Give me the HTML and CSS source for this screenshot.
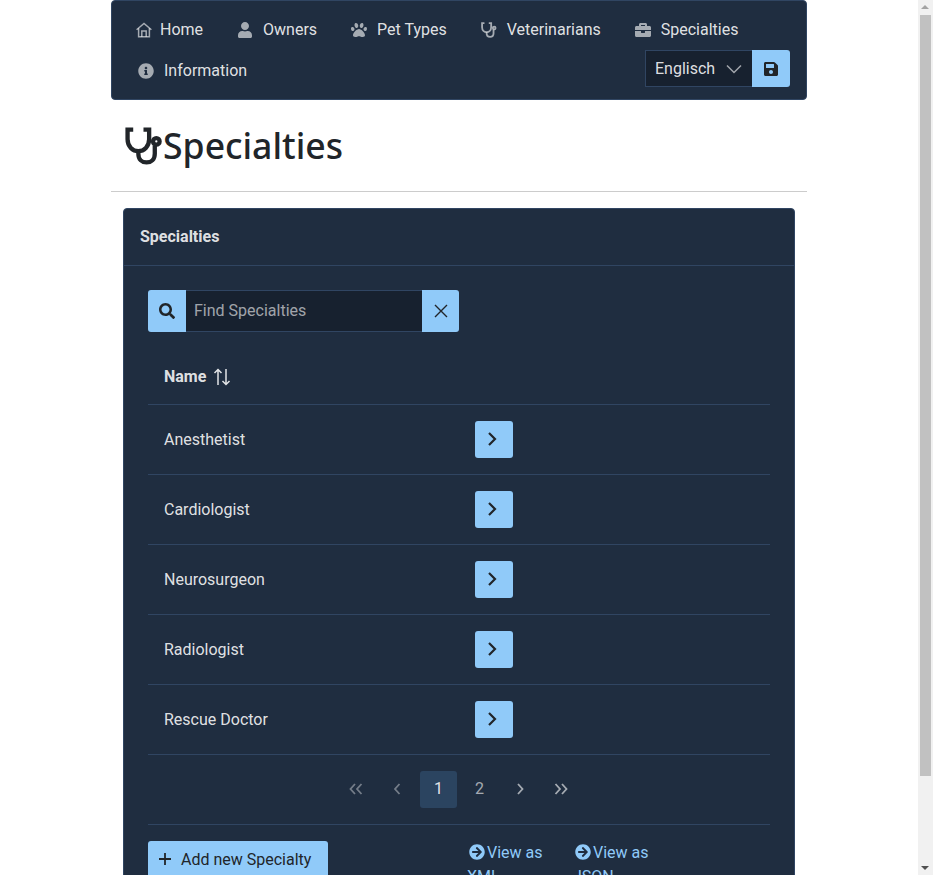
FILE: index.html
```html
<!DOCTYPE html>
<html lang="en">
<head>
  <meta charset="UTF-8">
  <meta name="viewport" content="width=device-width, initial-scale=1.0">
  <title>Specialties</title>
  <link rel="stylesheet" href="styles.css">
</head>
<body>
  <div class="container">
    <nav class="menubar">
      <a class="nav-link" href="#">
        <svg class="icon-home" viewBox="0 0 16 16" fill="none" stroke="currentColor" stroke-width="1.500"><path d="M.6 7.800 8 1.400l7.400 6.400"/><path d="M2.600 6.200v8.600h10.800V6.200"/><path d="M5.800 14.800V9h4.400v5.800"/></svg>
        <span>Home</span>
      </a>
      <a class="nav-link" href="#">
        <svg class="icon-fw" viewBox="0 0 448 512" fill="currentColor"><path d="M224 256c70.7 0 128-57.3 128-128S294.7 0 224 0 96 57.3 96 128s57.3 128 128 128zm89.6 32h-16.7c-22.2 10.2-46.9 16-72.9 16s-50.6-5.8-72.9-16h-16.7C60.2 288 0 348.2 0 422.4V464c0 26.5 21.5 48 48 48h352c26.5 0 48-21.5 48-48v-41.6c0-74.2-60.2-134.4-134.4-134.4z"/></svg>
        <span>Owners</span>
      </a>
      <a class="nav-link" href="#">
        <svg class="icon-fw" viewBox="0 0 512 512" fill="currentColor"><path d="M256 224c-79.41 0-192 122.76-192 200.25 0 34.9 26.81 55.75 71.74 55.75 48.84 0 81.09-25.08 120.26-25.08 39.51 0 71.85 25.08 120.26 25.08 44.93 0 71.74-20.85 71.74-55.75C448 346.76 335.41 224 256 224zm-147.28-12.61c-10.4-34.65-42.44-57.09-71.56-50.13-29.12 6.96-44.29 40.69-33.89 75.34 10.4 34.65 42.44 57.09 71.56 50.13 29.12-6.96 44.29-40.69 33.89-75.34zm84.72-20.78c30.94-8.14 46.42-49.94 34.58-93.36s-46.52-72.01-77.46-63.87-46.42 49.94-34.58 93.36c11.84 43.42 46.52 72.02 77.46 63.87zm281.39-29.34c-29.12-6.96-61.15 15.48-71.56 50.13-10.4 34.65 4.77 68.38 33.89 75.34 29.12 6.96 61.15-15.48 71.56-50.13 10.4-34.65-4.77-68.38-33.89-75.34zm-156.27 29.34c30.94 8.14 65.62-20.45 77.46-63.87 11.84-43.42-3.64-85.21-34.58-93.36s-65.62 20.45-77.46 63.87c-11.84 43.42 3.64 85.22 34.58 93.36z"/></svg>
        <span>Pet Types</span>
      </a>
      <a class="nav-link" href="#">
        <svg class="icon-fw" viewBox="0 0 37 37" fill="none" stroke="currentColor" stroke-width="4.200"><path d="M8 2.500H2.500V12c0 7 5 11.500 10.500 11.500S23.500 19 23.500 12V2.500H18"/><path d="M13 23.500V26c0 5.500 3.500 8.500 8 8.500s8-3 8-8.500v-8"/><circle cx="30.500" cy="14" r="3.200"/></svg>
        <span>Veterinarians</span>
      </a>
      <a class="nav-link" href="#">
        <svg class="icon-fw" viewBox="0 0 512 512" fill="currentColor"><path d="M320 336c0 8.840-7.160 16-16 16h-96c-8.840 0-16-7.160-16-16v-48H0v144c0 25.600 22.400 48 48 48h416c25.600 0 48-22.400 48-48V288H320v48zm144-208h-80V80c0-25.600-22.400-48-48-48H176c-25.600 0-48 22.400-48 48v48H48c-25.600 0-48 22.400-48 48v80h512v-80c0-25.600-22.400-48-48-48zm-144 0H192V96h128v32z"/></svg>
        <span>Specialties</span>
      </a>
      <a class="nav-link" href="#">
        <svg class="icon-fw" viewBox="0 0 512 512" fill="currentColor"><path d="M256 8C119.043 8 8 119.083 8 256c0 136.997 111.043 248 248 248s248-111.003 248-248C504 119.083 392.957 8 256 8zm0 110c23.196 0 42 18.804 42 42s-18.804 42-42 42-42-18.804-42-42 18.804-42 42-42zm56 254c0 6.627-5.373 12-12 12h-88c-6.627 0-12-5.373-12-12v-24c0-6.627 5.373-12 12-12h12v-64h-12c-6.627 0-12-5.373-12-12v-24c0-6.627 5.373-12 12-12h64c6.627 0 12 5.373 12 12v100h12c6.627 0 12 5.373 12 12v24z"/></svg>
        <span>Information</span>
      </a>
      <div class="lang-group">
        <div class="lang-select">
          <span>Englisch</span>
          <svg class="chevron-down" viewBox="0 0 16 10" fill="none" stroke="currentColor" stroke-width="1.500"><path d="M1 1.500l7 7 7-7"/></svg>
        </div>
        <button class="btn btn-lang" type="button">
          <svg class="icon-save" viewBox="0 0 448 512" fill="currentColor"><path d="M433.941 129.941l-83.882-83.882A48 48 0 0 0 316.118 32H48C21.490 32 0 53.490 0 80v352c0 26.510 21.490 48 48 48h352c26.510 0 48-21.490 48-48V163.882a48 48 0 0 0-14.059-33.941zM224 416c-35.346 0-64-28.654-64-64 0-35.346 28.654-64 64-64s64 28.654 64 64c0 35.346-28.654 64-64 64zm96-304.520V212c0 6.627-5.373 12-12 12H76c-6.627 0-12-5.373-12-12V108c0-6.627 5.373-12 12-12h228.520c3.183 0 6.235 1.264 8.485 3.515l3.480 3.480A11.996 11.996 0 0 1 320 111.480z"/></svg>
        </button>
      </div>
    </nav>

    <header class="page-title">
      <svg class="title-icon" viewBox="0 0 37 37" fill="none" stroke="currentColor" stroke-width="4.200"><path d="M8 2.500H2.500V12c0 7 5 11.500 10.500 11.500S23.500 19 23.500 12V2.500H18"/><path d="M13 23.500V26c0 5.500 3.500 8.500 8 8.500s8-3 8-8.500v-8"/><circle cx="30.500" cy="14" r="3.200"/></svg>
      <h1>Specialties</h1>
    </header>

    <section class="card">
      <div class="card-header">Specialties</div>
      <div class="card-body">
        <div class="search-group">
          <span class="search-addon">
            <svg class="icon-search" viewBox="0 0 512 512" fill="currentColor"><path d="M505 442.700L405.300 343c-4.500-4.500-10.600-7-17-7H372c27.600-35.300 44-79.700 44-128C416 93.100 322.900 0 208 0S0 93.100 0 208s93.100 208 208 208c48.300 0 92.700-16.400 128-44v16.300c0 6.400 2.500 12.500 7 17l99.700 99.700c9.400 9.400 24.600 9.400 33.900 0l28.300-28.300c9.400-9.400 9.400-24.600.1-34zM208 336c-70.700 0-128-57.200-128-128 0-70.700 57.200-128 128-128 70.700 0 128 57.200 128 128 0 70.700-57.200 128-128 128z"/></svg>
          </span>
          <input class="search-input" type="text" placeholder="Find Specialties">
          <button class="search-clear" type="button">
            <svg class="icon-x" viewBox="0 0 14 14" fill="none" stroke="currentColor" stroke-width="1.400"><path d="M1 1l12 12M13 1 1 13"/></svg>
          </button>
        </div>

        <table class="list">
          <thead>
            <tr>
              <th>
                <span class="sort-head">Name
                  <svg class="icon-sort" viewBox="0 0 18 18" fill="none" stroke="currentColor" stroke-width="1.500"><path d="M5 17V2M1.500 5 5 1.500 8.500 5"/><path d="M13 1v15M9.500 13l3.500 3.500 3.500-3.500"/></svg>
                </span>
              </th>
              <th></th>
            </tr>
          </thead>
          <tbody>
            <tr><td>Anesthetist</td><td><button class="btn btn-row" type="button"><svg class="icon-chevron" viewBox="0 0 10 14" fill="none" stroke="currentColor" stroke-width="2.200"><path d="M2 1l6 6-6 6"/></svg></button></td></tr>
            <tr><td>Cardiologist</td><td><button class="btn btn-row" type="button"><svg class="icon-chevron" viewBox="0 0 10 14" fill="none" stroke="currentColor" stroke-width="2.200"><path d="M2 1l6 6-6 6"/></svg></button></td></tr>
            <tr><td>Neurosurgeon</td><td><button class="btn btn-row" type="button"><svg class="icon-chevron" viewBox="0 0 10 14" fill="none" stroke="currentColor" stroke-width="2.200"><path d="M2 1l6 6-6 6"/></svg></button></td></tr>
            <tr><td>Radiologist</td><td><button class="btn btn-row" type="button"><svg class="icon-chevron" viewBox="0 0 10 14" fill="none" stroke="currentColor" stroke-width="2.200"><path d="M2 1l6 6-6 6"/></svg></button></td></tr>
            <tr><td>Rescue Doctor</td><td><button class="btn btn-row" type="button"><svg class="icon-chevron" viewBox="0 0 10 14" fill="none" stroke="currentColor" stroke-width="2.200"><path d="M2 1l6 6-6 6"/></svg></button></td></tr>
          </tbody>
        </table>

        <div class="pager">
          <a class="page-item disabled" href="#"><svg class="icon-page" viewBox="0 0 14 12" fill="none" stroke="currentColor" stroke-width="1.800"><path d="M6 1 1.500 6 6 11M12.500 1 8 6l4.500 5"/></svg></a>
          <a class="page-item disabled" href="#"><svg class="icon-page" viewBox="0 0 14 12" fill="none" stroke="currentColor" stroke-width="1.800"><path d="M9.500 1 5 6l4.500 5"/></svg></a>
          <a class="page-item active" href="#">1</a>
          <a class="page-item" href="#">2</a>
          <a class="page-item" href="#"><svg class="icon-page" viewBox="0 0 14 12" fill="none" stroke="currentColor" stroke-width="1.800"><path d="M5 1l4.500 5L5 11"/></svg></a>
          <a class="page-item" href="#"><svg class="icon-page" viewBox="0 0 14 12" fill="none" stroke="currentColor" stroke-width="1.800"><path d="M1.500 1 6 6l-4.500 5M8 1l4.500 5L8 11"/></svg></a>
        </div>

        <div class="card-actions">
          <div class="add-col">
            <button class="btn btn-add" type="button">
              <svg class="icon-plus" viewBox="0 0 14 14" fill="none" stroke="currentColor" stroke-width="1.800"><path d="M7 1v12M1 7h12"/></svg>
              <span>Add new Specialty</span>
            </button>
          </div>
          <div class="view-col"><a class="view-link" href="#"><svg class="icon-arrow" viewBox="0 0 512 512" fill="currentColor"><path d="M256 8c137 0 248 111 248 248S393 504 256 504 8 393 8 256 119 8 256 8zm-28.900 143.600l75.500 72.400H120c-13.300 0-24 10.700-24 24v16c0 13.300 10.700 24 24 24h182.600l-75.500 72.400c-9.700 9.300-9.900 24.800-.4 34.300l11 10.900c9.400 9.400 24.600 9.400 33.900 0L404.300 273c9.400-9.400 9.400-24.600 0-33.900L271.600 106.300c-9.400-9.400-24.600-9.400-33.900 0l-11 10.900c-9.500 9.600-9.300 25.100.4 34.400z"/></svg>View as XML</a></div>
          <div class="view-col"><a class="view-link" href="#"><svg class="icon-arrow" viewBox="0 0 512 512" fill="currentColor"><path d="M256 8c137 0 248 111 248 248S393 504 256 504 8 393 8 256 119 8 256 8zm-28.900 143.600l75.500 72.400H120c-13.300 0-24 10.700-24 24v16c0 13.300 10.700 24 24 24h182.600l-75.500 72.400c-9.700 9.300-9.900 24.800-.4 34.300l11 10.900c9.400 9.400 24.600 9.400 33.900 0L404.300 273c9.400-9.400 9.400-24.600 0-33.900L271.600 106.300c-9.400-9.400-24.600-9.400-33.900 0l-11 10.900c-9.500 9.600-9.300 25.100.4 34.400z"/></svg>View as JSON</a></div>
        </div>
      </div>
    </section>
  </div>

  <div class="scrollbar">
    <span class="scroll-arrow up"></span>
    <div class="scroll-thumb"></div>
    <span class="scroll-arrow down"></span>
  </div>
</body>
</html>
```
FILE: styles.css
```css
body {
  margin: 0;
  padding-right: 15px;
  background-color: #fff;
  color: rgba(255, 255, 255, 0.87);
  font-family: 'Roboto', sans-serif;
  font-size: 16px;
  line-height: 24px;
}
a {
  text-decoration: none;
  color: inherit;
}
button {
  font-family: inherit;
  font-size: inherit;
  border: none;
  padding: 0;
  cursor: pointer;
}
.container {
  width: 696px;
  margin: 0 auto;
  padding-bottom: 32px;
}

/* window scrollbar */
.scrollbar {
  position: fixed;
  top: 0;
  right: 0;
  bottom: 0;
  width: 15px;
  background-color: #f1f1f1;
}
.scroll-thumb {
  position: absolute;
  top: 15px;
  left: 2px;
  width: 11px;
  height: 761px;
  background-color: #c1c1c1;
}
.scroll-arrow {
  position: absolute;
  left: 3px;
  border-left: 4px solid transparent;
  border-right: 4px solid transparent;
}
.scroll-arrow.up {
  top: 5px;
  border-bottom: 4px solid #a3a3a3;
}
.scroll-arrow.down {
  bottom: 5px;
  border-top: 4px solid #505050;
}

/* top menu */
.menubar {
  display: flex;
  flex-wrap: wrap;
  row-gap: 1px;
  align-content: flex-start;
  align-items: flex-start;
  height: 100px;
  box-sizing: border-box;
  padding: 8px;
  background-color: #1f2d40;
  border: 1px solid #304562;
  border-radius: 4px;
}
.nav-link {
  display: flex;
  align-items: center;
  gap: 8px;
  height: 40px;
  box-sizing: border-box;
  padding: 2px 16px 0;
  color: rgba(255, 255, 255, 0.87);
}
.nav-link svg {
  color: rgba(255, 255, 255, 0.6);
}
.icon-home {
  width: 16px;
  height: 16px;
}
.icon-fw {
  width: 20px;
  height: 16px;
}
.lang-group {
  display: flex;
  margin-left: auto;
  margin-right: 8px;
  height: 37px;
}
.lang-select {
  display: flex;
  align-items: center;
  justify-content: space-between;
  width: 107px;
  box-sizing: border-box;
  padding: 0 10px 0 9px;
  background-color: #17212f;
  border: 1px solid #304562;
  border-right: none;
  border-radius: 0;
}
.chevron-down {
  width: 16px;
  height: 10px;
  color: rgba(255, 255, 255, 0.6);
}
.btn {
  display: inline-flex;
  align-items: center;
  justify-content: center;
  background-color: #90caf9;
  color: #212529;
  border-radius: 3px;
}
.btn-lang {
  width: 38px;
  height: 37px;
  border-radius: 0 3px 3px 0;
}
.icon-save {
  width: 14px;
  height: 16px;
}

/* page heading */
.page-title {
  display: flex;
  align-items: center;
  height: 91px;
  padding-left: 14px;
  border-bottom: 1px solid #ccc;
  color: #212529;
}
.title-icon {
  width: 38px;
  height: 38px;
}
.page-title h1 {
  margin: 0;
  font-family: 'Noto Sans', sans-serif;
  font-size: 35.6px;
  font-weight: 500;
  line-height: 43px;
}

/* card */
.card {
  margin: 16px 12px 0;
  background-color: #1f2d40;
  border: 1px solid #304562;
  border-radius: 4px;
}
.card-header {
  height: 57px;
  box-sizing: border-box;
  padding: 16px;
  font-weight: 700;
  border-bottom: 1px solid #304562;
}
.card-body {
  padding: 24px;
}
.search-group {
  display: flex;
  height: 42px;
  width: 311px;
}
.search-addon {
  display: flex;
  align-items: center;
  justify-content: center;
  width: 38px;
  background-color: #90caf9;
  color: #212529;
  border-radius: 3px 0 0 3px;
}
.icon-search {
  width: 16px;
  height: 16px;
}
.search-input {
  flex: 1;
  min-width: 0;
  box-sizing: border-box;
  padding: 0 8px 2px;
  background-color: #17212f;
  border: 1px solid #304562;
  border-left: none;
  border-right: none;
  color: rgba(255, 255, 255, 0.87);
  font-family: inherit;
  font-size: 16px;
  outline: none;
}
.search-input::placeholder {
  color: rgba(255, 255, 255, 0.6);
}
.search-clear {
  display: flex;
  align-items: center;
  justify-content: center;
  width: 37px;
  background-color: #90caf9;
  color: #212529;
  border-radius: 0 3px 3px 0;
}
.icon-x {
  width: 14px;
  height: 14px;
}

/* table */
.list {
  width: 100%;
  margin-top: 16px;
  border-collapse: collapse;
  table-layout: fixed;
}
.list th {
  height: 56px;
  padding: 2px 16px 0;
  text-align: left;
  font-weight: 700;
  border-bottom: 1px solid #304562;
  box-sizing: border-box;
}
.list td {
  height: 70px;
  padding: 0 16px;
  border-bottom: 1px solid #304562;
  box-sizing: border-box;
}
.list td:first-child {
  padding-top: 2px;
}
.sort-head {
  display: inline-flex;
  align-items: center;
  gap: 7px;
}
.icon-sort {
  width: 18px;
  height: 18px;
}
.btn-row {
  width: 38px;
  height: 37px;
  vertical-align: middle;
}
.icon-chevron {
  width: 10px;
  height: 14px;
  margin-right: 4px;
}

/* pager */
.pager {
  display: flex;
  justify-content: center;
  gap: 4px;
  padding: 16px 0;
  border-bottom: 1px solid #304562;
}
.page-item {
  display: flex;
  align-items: center;
  justify-content: center;
  width: 37px;
  height: 37px;
  border-radius: 3px;
  color: rgba(255, 255, 255, 0.6);
}
.page-item.disabled {
  color: rgba(255, 255, 255, 0.38);
}
.page-item.active {
  background-color: #2b4460;
  color: rgba(255, 255, 255, 0.87);
}
.icon-page {
  width: 14px;
  height: 12px;
  margin-right: 1px;
}

/* bottom row */
.card-actions {
  display: flex;
  align-items: flex-start;
  padding-top: 16px;
}
.add-col {
  width: 319px;
}
.btn-add {
  justify-content: flex-start;
  gap: 9px;
  width: 180px;
  height: 37px;
  padding: 0 10px;
  box-sizing: border-box;
}
.icon-plus {
  width: 14px;
  height: 14px;
}
.view-col {
  width: 106px;
}
.view-link {
  color: #90caf9;
}
.icon-arrow {
  width: 16px;
  height: 16px;
  margin: 0 2px;
  vertical-align: -2px;
}
```
